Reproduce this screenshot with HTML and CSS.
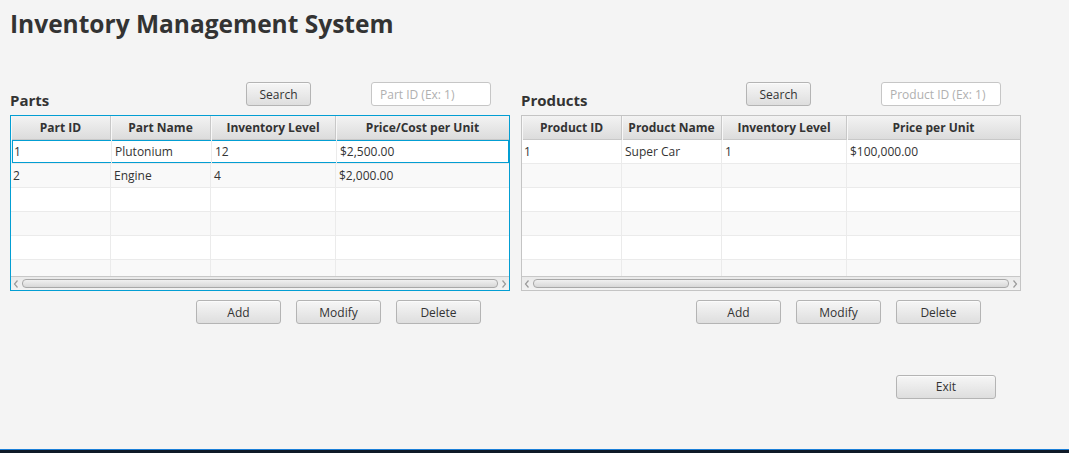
FILE: index.html
```html
<!DOCTYPE html>
<html>
<head>
<meta charset="utf-8">
<title>Inventory Management System</title>
<link rel="stylesheet" href="styles.css">
</head>
<body>
<div class="app">
  <h1 class="title">Inventory Management System</h1>
  <div class="panels">
    <section class="panel panel-parts">
      <div class="panel-head">
        <h2 class="panel-title">Parts</h2>
        <button class="btn btn-search">Search</button>
        <input class="search" type="text" placeholder="Part ID (Ex: 1)">
      </div>
      <div class="table focused">
        <div class="thead row">
          <div class="th">Part ID</div>
          <div class="th">Part Name</div>
          <div class="th">Inventory Level</div>
          <div class="th">Price/Cost per Unit</div>
        </div>
        <div class="tbody">
          <div class="row tr selected"><div class="td">1</div><div class="td">Plutonium</div><div class="td">12</div><div class="td">$2,500.00</div></div>
          <div class="row tr"><div class="td">2</div><div class="td">Engine</div><div class="td">4</div><div class="td">$2,000.00</div></div>
          <div class="row tr"><div class="td"></div><div class="td"></div><div class="td"></div><div class="td"></div></div>
          <div class="row tr"><div class="td"></div><div class="td"></div><div class="td"></div><div class="td"></div></div>
          <div class="row tr"><div class="td"></div><div class="td"></div><div class="td"></div><div class="td"></div></div>
          <div class="row tr"><div class="td"></div><div class="td"></div><div class="td"></div><div class="td"></div></div>
        </div>
        <div class="hscroll">
          <svg class="arrow" width="11" height="14" viewBox="0 0 11 14"><polyline points="6.5,3.5 3.5,7 6.5,10.5" fill="none" stroke="#9a9a9a" stroke-width="1.2"/></svg>
          <div class="thumb"></div>
          <svg class="arrow" width="11" height="14" viewBox="0 0 11 14"><polyline points="4.5,3.5 7.5,7 4.5,10.5" fill="none" stroke="#9a9a9a" stroke-width="1.2"/></svg>
        </div>
      </div>
      <div class="actions">
        <button class="btn btn-action">Add</button>
        <button class="btn btn-action">Modify</button>
        <button class="btn btn-action">Delete</button>
      </div>
    </section>
    <section class="panel panel-products">
      <div class="panel-head">
        <h2 class="panel-title">Products</h2>
        <button class="btn btn-search">Search</button>
        <input class="search" type="text" placeholder="Product ID (Ex: 1)">
      </div>
      <div class="table">
        <div class="thead row">
          <div class="th">Product ID</div>
          <div class="th">Product Name</div>
          <div class="th">Inventory Level</div>
          <div class="th">Price per Unit</div>
        </div>
        <div class="tbody">
          <div class="row tr"><div class="td">1</div><div class="td">Super Car</div><div class="td">1</div><div class="td">$100,000.00</div></div>
          <div class="row tr"><div class="td"></div><div class="td"></div><div class="td"></div><div class="td"></div></div>
          <div class="row tr"><div class="td"></div><div class="td"></div><div class="td"></div><div class="td"></div></div>
          <div class="row tr"><div class="td"></div><div class="td"></div><div class="td"></div><div class="td"></div></div>
          <div class="row tr"><div class="td"></div><div class="td"></div><div class="td"></div><div class="td"></div></div>
          <div class="row tr"><div class="td"></div><div class="td"></div><div class="td"></div><div class="td"></div></div>
        </div>
        <div class="hscroll">
          <svg class="arrow" width="11" height="14" viewBox="0 0 11 14"><polyline points="6.5,3.5 3.5,7 6.5,10.5" fill="none" stroke="#9a9a9a" stroke-width="1.2"/></svg>
          <div class="thumb"></div>
          <svg class="arrow" width="11" height="14" viewBox="0 0 11 14"><polyline points="4.5,3.5 7.5,7 4.5,10.5" fill="none" stroke="#9a9a9a" stroke-width="1.2"/></svg>
        </div>
      </div>
      <div class="actions">
        <button class="btn btn-action">Add</button>
        <button class="btn btn-action">Modify</button>
        <button class="btn btn-action">Delete</button>
      </div>
      <div class="exit-row">
        <button class="btn btn-exit">Exit</button>
      </div>
    </section>
  </div>
</div>
<div class="taskbar"></div>
</body>
</html>
```

FILE: styles.css
```css
* { box-sizing: border-box; }
html, body { margin: 0; padding: 0; height: 100%; }
body {
  background: #f4f4f4;
  font-family: "Open Sans", "Noto Sans", sans-serif;
  color: #333;
  display: flex;
  flex-direction: column;
  overflow: hidden;
}
.app { flex: 1; padding: 0 10px; }
.title {
  margin: 0;
  padding-top: 4px;
  height: 44px;
  font-size: 24.5px;
  line-height: 40px;
  font-weight: 700;
  color: #333;
}
.panels { display: flex; gap: 11px; margin-top: 38px; }
.panel { width: 500px; }
.panel-head { display: flex; align-items: flex-end; height: 24px; }
.panel-title {
  margin: 0 0 -3px 0;
  font-size: 15px;
  line-height: 18px;
  font-weight: 700;
}
.panel-parts .panel-title { width: 236px; }
.panel-products .panel-title { width: 225px; }
.btn {
  font-family: inherit;
  font-size: 12px;
  color: #333;
  height: 24px;
  padding: 0;
  border: 1px solid #b4b4b4;
  border-radius: 3px;
  background: linear-gradient(#f6f6f6, #dedede);
  box-shadow: inset 0 1px 0 #fbfbfb;
  cursor: default;
}
.btn-search { width: 65px; margin-right: 60px; }
.panel-products .btn-search { margin-right: 70px; }
.search {
  width: 120px;
  height: 24px;
  border: 1px solid #c6c6c6;
  border-radius: 3px;
  background: #fff;
  font-family: inherit;
  font-size: 12px;
  padding: 0 8px;
  color: #333;
}
.search::placeholder { color: #b0b0b0; }
.table {
  margin-top: 9px;
  height: 176px;
  border: 1px solid #c4c4c4;
  display: flex;
  flex-direction: column;
  background: #fff;
}
.table.focused {
  border-color: #039ed3;
  box-shadow: inset 0 0 0 1px #e3f3fa;
}
.row {
  display: grid;
  grid-template-columns: 100px 100px 125px 1fr;
  height: 24px;
  flex: none;
}
.thead {
  background: linear-gradient(#f3f3f3, #dcdcdc);
  border-bottom: 1px solid #c8c8c8;
}
.th {
  font-size: 12px;
  font-weight: 700;
  text-align: center;
  line-height: 24px;
  border-right: 1px solid #c8c8c8;
  box-shadow: inset 1px 0 0 #f8f8f8;
  white-space: nowrap;
}
.th:last-child { border-right: none; }
.tbody { flex: 1; overflow: hidden; }
.tr { border-bottom: 1px solid #ebebeb; background: #fff; }
.tr:nth-child(even) { background: #f9f9f9; }
.td {
  font-size: 12px;
  line-height: 23px;
  padding-left: 3px;
  border-right: 1px solid #ebebeb;
  white-space: nowrap;
  overflow: hidden;
}
.td:first-child { padding-left: 2px; }
.td:last-child { border-right: none; }
.tr.selected { box-shadow: inset 1px 1px 0 #039ed3, inset -1px -1px 0 #039ed3; margin-left: 1px; background: #fff; }
.hscroll {
  height: 14px;
  flex: none;
  border-top: 1px solid #c8c8c8;
  background: linear-gradient(#eaeaea, #f2f2f2);
  display: flex;
  align-items: center;
}
.arrow { flex: none; display: block; }
.thumb {
  flex: 1;
  height: 9px;
  border: 1px solid #a8a8a8;
  border-radius: 4px;
  background: linear-gradient(#f0f0f0, #d8d8d8);
}
.actions { display: flex; gap: 15px; padding-left: 186px; margin-top: 9px; }
.panel-products .actions { padding-left: 175px; }
.btn-action { width: 85px; }
.exit-row { padding-left: 375px; margin-top: 50px; }
.btn-exit { width: 100px; }
.taskbar {
  height: 4px;
  flex: none;
  border-top: 1px solid #1b7fd8;
  background: #0f1a27;
}
```
